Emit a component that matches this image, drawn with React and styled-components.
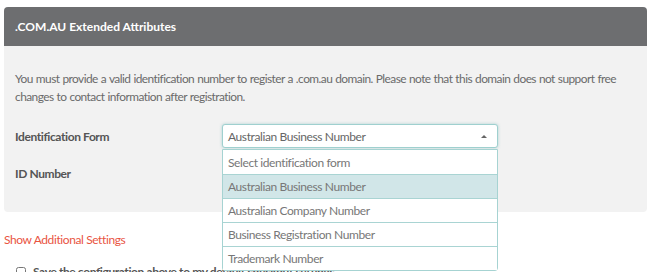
import styled, { createGlobalStyle } from "styled-components";

const GlobalStyle = createGlobalStyle`
  body {
    margin: 0;
    background: #fff;
    font-family: Lato, "Open Sans", sans-serif;
    font-size: 12px;
    letter-spacing: -0.4px;
    color: #666;
  }
`;

const Page = styled.div`
  padding: 7px 0 0 4px;
  width: 643px;
`;

const Panel = styled.section`
  border-radius: 4px;
  background: #f2f2f2;
`;

const PanelHeader = styled.div`
  height: 39px;
  display: flex;
  align-items: center;
  padding: 0 11px;
  background: #6d6e70;
  border-radius: 4px 4px 0 0;
  color: #fff;
  font-weight: 700;
  font-size: 12px;
  letter-spacing: 0;
`;

const PanelBody = styled.div`
  padding: 24px 11px 27px;
`;

const Intro = styled.p`
  margin: 0 0 18px;
  line-height: 18px;
  font-size: 11.9px;
  color: #6a6a6a;
  letter-spacing: -0.55px;
  word-spacing: 0.5px;
`;

const FormRow = styled.div`
  display: flex;
  align-items: center;
  height: 24px;
  margin-bottom: 13px;
  &:last-child {
    margin-bottom: 0;
  }
`;

const Label = styled.label`
  width: 207px;
  font-weight: 700;
  color: #555;
`;

const Field = styled.div`
  position: relative;
  width: 276px;
`;

const SelectBox = styled.div`
  height: 24px;
  box-sizing: border-box;
  border: 1px solid #9fd0cf;
  border-radius: 3px;
  background: #fff;
  box-shadow: 0 0 3px rgba(102, 175, 175, 0.5);
  display: flex;
  align-items: center;
  justify-content: space-between;
  padding: 0 10px 0 5px;
  color: #666;
`;

const Caret = styled.span`
  width: 0;
  height: 0;
  border-left: 3px solid transparent;
  border-right: 3px solid transparent;
  border-bottom: 3px solid #666;
`;

const TextInput = styled.input`
  width: 100%;
  height: 24px;
  box-sizing: border-box;
  border: 1px solid #ccc;
  border-radius: 3px;
`;

const Dropdown = styled.ul`
  position: absolute;
  top: 25px;
  left: 0;
  width: 276px;
  box-sizing: border-box;
  margin: 0;
  padding: 0;
  list-style: none;
  background: #fff;
  border: 1px solid #a6d3d2;
  border-radius: 0 0 3px 3px;
  z-index: 2;
`;

const Option = styled.li`
  height: 24px;
  box-sizing: border-box;
  display: flex;
  align-items: center;
  padding: 0 5px;
  color: #777;
  background: ${(p) => (p.active ? "#d1e6e8" : "#fff")};
  border-top: ${(p) => (p.first ? "none" : "1px solid #a9d4d3")};
`;

const MoreLink = styled.a`
  display: block;
  margin-top: 20px;
  color: #e9543f;
  text-decoration: none;
`;

const CheckRow = styled.label`
  display: flex;
  align-items: center;
  gap: 7px;
  margin: 17px 0 0 12px;
  font-weight: 700;
  color: #555;
  input {
    margin: 0;
    width: 10px;
    height: 10px;
  }
`;

const options = [
  "Select identification form",
  "Australian Business Number",
  "Australian Company Number",
  "Business Registration Number",
  "Trademark Number",
];

export default function App() {
  return (
    <Page>
      <GlobalStyle />
      <Panel>
        <PanelHeader>.COM.AU Extended Attributes</PanelHeader>
        <PanelBody>
          <Intro>
            You must provide a valid identification number to register a .com.au domain. Please note that this domain does not support free changes to contact information after registration.
          </Intro>
          <FormRow>
            <Label>Identification Form</Label>
            <Field>
              <SelectBox>
                Australian Business Number
                <Caret />
              </SelectBox>
              <Dropdown>
                {options.map((o, i) => (
                  <Option key={o} first={i === 0} active={i === 1}>
                    {o}
                  </Option>
                ))}
              </Dropdown>
            </Field>
          </FormRow>
          <FormRow>
            <Label>ID Number</Label>
            <Field>
              <TextInput />
            </Field>
          </FormRow>
        </PanelBody>
      </Panel>
      <MoreLink href="#">Show Additional Settings</MoreLink>
      <CheckRow>
        <input type="checkbox" />
        Save the configuration above to my default checkout settings
      </CheckRow>
    </Page>
  );
}
